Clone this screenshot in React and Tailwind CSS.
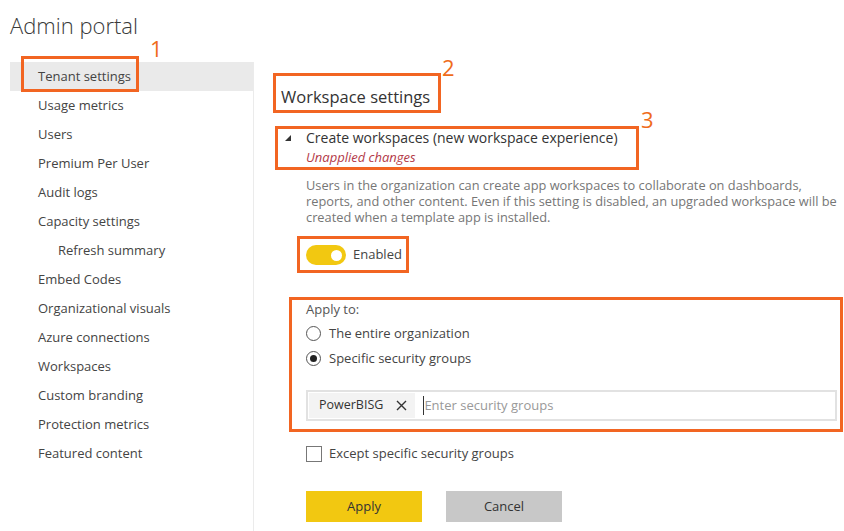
import React from "react";

const navItems = [
  { label: "Tenant settings", active: true },
  { label: "Usage metrics" },
  { label: "Users" },
  { label: "Premium Per User" },
  { label: "Audit logs" },
  { label: "Capacity settings" },
  { label: "Refresh summary", indent: true },
  { label: "Embed Codes" },
  { label: "Organizational visuals" },
  { label: "Azure connections" },
  { label: "Workspaces" },
  { label: "Custom branding" },
  { label: "Protection metrics" },
  { label: "Featured content" },
];

function Radio({ checked, label }) {
  return (
    <div className="flex items-center h-[25px]">
      <span className="w-[15px] h-[15px] rounded-full border border-[#555] flex items-center justify-center bg-white">
        {checked && <span className="w-[7px] h-[7px] rounded-full bg-[#222]" />}
      </span>
      <span className="ml-[8px] text-[13px] text-[#444]">{label}</span>
    </div>
  );
}

export default function App() {
  return (
    <div className="relative w-[844px] h-[531px] bg-white overflow-hidden font-['Open_Sans',sans-serif] text-[#333]">
      <div className="pl-[10px] pt-[10px] text-[22px] leading-[30px] font-light text-[#3a3a3a]">
        Admin portal
      </div>
      <div className="flex mt-[22px]">
        <nav className="w-[244px] ml-[10px] border-r border-[#ebebeb] h-[469px] flex flex-col">
          {navItems.map((it) => (
            <div
              key={it.label}
              className={`h-[29px] flex items-center text-[13px] text-[#444] ${
                it.active ? "bg-[#eaeaea]" : ""
              } ${it.indent ? "pl-[48px]" : "pl-[28px]"}`}
            >
              {it.label}
            </div>
          ))}
        </nav>
        <main className="flex-1 pl-[27px]">
          <h2 className="mt-[23px] text-[16.5px] leading-[24px] text-[#333]">Workspace settings</h2>
          <div className="mt-[19px] flex items-start">
            <svg width="6" height="6" viewBox="0 0 6 6" className="mt-[7px] ml-[4px] mr-[15px]">
              <polygon points="6,0 6,6 0,6" fill="#333" />
            </svg>
            <div>
              <div className="text-[14px] leading-[20px] text-[#333] whitespace-nowrap">
                Create workspaces (new workspace experience)
              </div>
              <div className="text-[13px] leading-[18px] italic text-[#b33a48]">Unapplied changes</div>
            </div>
          </div>
          <div className="pl-[25px]">
            <p className="mt-[11px] text-[12.8px] leading-[16px] text-[#767676] w-[535px]">
              Users in the organization can create app workspaces to collaborate on dashboards,
              reports, and other content. Even if this setting is disabled, an upgraded workspace will be
              created when a template app is installed.
            </p>
            <div className="mt-[20px] flex items-center h-[20px]">
              <span className="relative w-[40px] h-[20px] rounded-full bg-[#f2c811] flex items-center">
                <span className="absolute right-[4px] w-[11px] h-[11px] rounded-full bg-white" />
              </span>
              <span className="ml-[7px] text-[13px] text-[#444]">Enabled</span>
            </div>
            <div className="mt-[35px] text-[13px] leading-[18px] text-[#555]">Apply to:</div>
            <div className="mt-[3px] flex flex-col">
              <Radio label="The entire organization" />
              <Radio checked label="Specific security groups" />
            </div>
            <div className="mt-[19px] w-[531px] h-[31px] border-2 border-[#e2e2e2] flex items-center pl-[1px]">
              <div className="h-[25px] bg-[#f3f3f3] flex items-center pl-[10px] pr-[8px]">
                <span className="text-[12.5px] text-[#333]">PowerBISG</span>
                <svg width="11" height="11" viewBox="0 0 11 11" className="ml-[13px]">
                  <path d="M1 1 L10 10 M10 1 L1 10" stroke="#333" strokeWidth="1.4" />
                </svg>
              </div>
              <span className="ml-[8px] w-[1px] h-[19px] bg-[#333]" />
              <span className="text-[13px] text-[#999]">Enter security groups</span>
            </div>
            <div className="mt-[25px] flex items-center h-[16px]">
              <span className="w-[16px] h-[16px] border border-[#777] bg-white" />
              <span className="ml-[7px] text-[13px] text-[#444]">Except specific security groups</span>
            </div>
            <div className="mt-[29px] flex gap-[24px]">
              <button className="w-[116px] h-[31px] bg-[#f2c811] text-[13px] text-[#333]">Apply</button>
              <button className="w-[116px] h-[31px] bg-[#c8c8c8] text-[13px] text-[#333]">Cancel</button>
            </div>
          </div>
        </main>
      </div>

      {/* annotation overlays */}
      <div className="absolute left-[21px] top-[56px] w-[118px] h-[36px] border-[3px] border-[#f26522]" />
      <div className="absolute left-[150px] top-[35px] text-[22px] leading-[26px] text-[#ef6c1a]">1</div>
      <div className="absolute left-[442px] top-[54px] text-[22px] leading-[26px] text-[#ef6c1a]">2</div>
      <div className="absolute left-[273px] top-[73px] w-[168px] h-[40px] border-[3px] border-[#f26522]" />
      <div className="absolute left-[641px] top-[106px] text-[22px] leading-[26px] text-[#ef6c1a]">3</div>
      <div className="absolute left-[275px] top-[126px] w-[364px] h-[44px] border-[3px] border-[#f26522]" />
      <div className="absolute left-[297px] top-[236px] w-[112px] h-[37px] border-[3px] border-[#f26522]" />
      <div className="absolute left-[289px] top-[297px] w-[554px] h-[135px] border-[3px] border-[#f26522]" />
    </div>
  );
}
